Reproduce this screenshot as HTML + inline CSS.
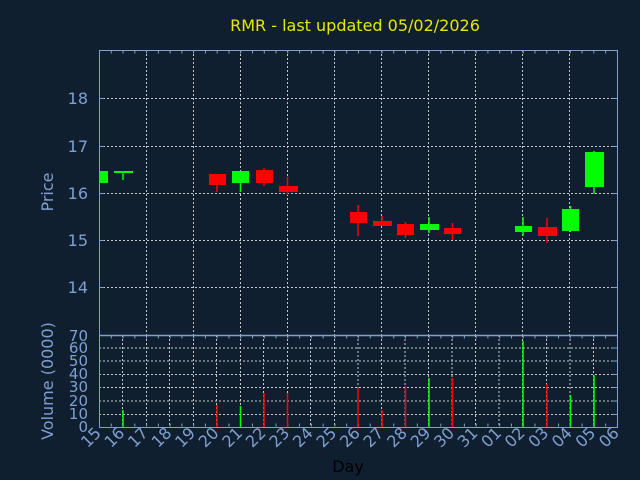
<!DOCTYPE html>
<html><head><meta charset="utf-8"><style>
html,body{margin:0;padding:0;background:#0f1f2f;}
svg{display:block;font-family:"DejaVu Sans","Liberation Sans",sans-serif;}
</style></head><body>
<svg width="640" height="480" viewBox="0 0 640 480" xmlns="http://www.w3.org/2000/svg">
<rect width="640" height="480" fill="#0f1f2f"/>
<text x="355" y="31" fill="#e8e800" font-size="16" text-anchor="middle">RMR - last updated 05/02/2026</text>

<!-- price grid -->
<g stroke="#c8c8c8" stroke-width="1" stroke-dasharray="2 2" fill="none">
<path d="M99 98.5H617M99 146.5H617M99 193.5H617M99 240.5H617M99 287.5H617"/>
<path d="M146.5 50V335M193.5 50V335M240.5 50V335M287.5 50V335M334.5 50V335M381.5 50V335M428.5 50V335M475.5 50V335M522.5 50V335M569.5 50V335"/>
<!-- volume grid -->
<path d="M99 414.5H617M99 401H617M99 387.5H617M99 374.5H617M99 361H617M99 348H617"/>
<path d="M122.5 335V427M146.5 335V427M169.5 335V427M193.5 335V427M216.5 335V427M240.5 335V427M263.5 335V427M287.5 335V427M310.5 335V427M334.5 335V427M358 335V427M381.5 335V427M405 335V427M428.5 335V427M452 335V427M475.5 335V427M499 335V427M522.5 335V427M546.5 335V427M570 335V427M593.5 335V427"/>
</g>

<!-- axes -->
<g stroke="#80a0d0" fill="none">
<path d="M99.5 50.5H617.5V427.5H99.5Z" stroke-width="1"/>
<path d="M99 335.5H617" stroke-width="1.5"/>
<path d="M99 52H618M99 337H618M99 425H618" stroke-width="3" stroke-dasharray="1 10.77"/>
<path d="M612 98.5H617M612 146.5H617M612 193.5H617M612 240.5H617M612 287.5H617M612 414.5H617M612 401H617M612 387.5H617M612 374.5H617M612 361H617M612 348H617"/>
<path d="M99 98.5H104M99 146.5H104M99 193.5H104M99 240.5H104M99 287.5H104"/>
</g>

<!-- y labels -->
<g fill="#80a0d0" font-size="16" text-anchor="end">
<text x="88" y="104">18</text><text x="88" y="152">17</text><text x="88" y="199">16</text><text x="88" y="246">15</text><text x="88" y="293">14</text>
</g>
<g fill="#80a0d0" font-size="15" text-anchor="end">
<text x="88" y="341">70</text><text x="88" y="353">60</text><text x="88" y="366">50</text><text x="88" y="379">40</text><text x="88" y="392">30</text><text x="88" y="406">20</text><text x="88" y="419">10</text><text x="88" y="432">0</text>
</g>
<text transform="translate(53,192) rotate(-90)" fill="#80a0d0" font-size="16" text-anchor="middle">Price</text>
<text transform="translate(53,381) rotate(-90)" fill="#80a0d0" font-size="16" text-anchor="middle">Volume (0000)</text>

<!-- x labels -->
<g fill="#80a0d0" font-size="16" text-anchor="end">
<text transform="translate(102,434) rotate(-45)">15</text>
<text transform="translate(125.5,434) rotate(-45)">16</text>
<text transform="translate(149,434) rotate(-45)">17</text>
<text transform="translate(172.6,434) rotate(-45)">18</text>
<text transform="translate(196.2,434) rotate(-45)">19</text>
<text transform="translate(219.7,434) rotate(-45)">20</text>
<text transform="translate(243.3,434) rotate(-45)">21</text>
<text transform="translate(266.8,434) rotate(-45)">22</text>
<text transform="translate(290.4,434) rotate(-45)">23</text>
<text transform="translate(313.9,434) rotate(-45)">24</text>
<text transform="translate(337.5,434) rotate(-45)">25</text>
<text transform="translate(361,434) rotate(-45)">26</text>
<text transform="translate(384.5,434) rotate(-45)">27</text>
<text transform="translate(408.1,434) rotate(-45)">28</text>
<text transform="translate(431.6,434) rotate(-45)">29</text>
<text transform="translate(455.2,434) rotate(-45)">30</text>
<text transform="translate(478.7,434) rotate(-45)">31</text>
<text transform="translate(502.3,434) rotate(-45)">01</text>
<text transform="translate(525.8,434) rotate(-45)">02</text>
<text transform="translate(549.4,434) rotate(-45)">03</text>
<text transform="translate(572.9,434) rotate(-45)">04</text>
<text transform="translate(596.5,434) rotate(-45)">05</text>
<text transform="translate(620,434) rotate(-45)">06</text>
</g>
<text x="348" y="472" fill="#000" font-size="16" text-anchor="middle">Day</text>

<!-- candles -->
<g stroke-width="1.5">
<rect x="99" y="171" width="9" height="12" fill="#00ff00"/>
<line x1="123" y1="171" x2="123" y2="180" stroke="#00ff00"/><rect x="114" y="171" width="19" height="2" fill="#00ff00"/>
<line x1="217" y1="174" x2="217" y2="192" stroke="#ff0000"/><rect x="209" y="174" width="17" height="11" fill="#ff0000"/>
<line x1="240.5" y1="171" x2="240.5" y2="192" stroke="#00ff00"/><rect x="232" y="171" width="17" height="12" fill="#00ff00"/>
<line x1="264" y1="168" x2="264" y2="186" stroke="#ff0000"/><rect x="256" y="170" width="17" height="13" fill="#ff0000"/>
<line x1="287.5" y1="177" x2="287.5" y2="195" stroke="#ff0000"/><rect x="279" y="186" width="19" height="6" fill="#ff0000"/>
<line x1="358" y1="205" x2="358" y2="236" stroke="#ff0000"/><rect x="350" y="212" width="17" height="11" fill="#ff0000"/>
<line x1="382" y1="216" x2="382" y2="226" stroke="#ff0000"/><rect x="373" y="221" width="19" height="5" fill="#ff0000"/>
<line x1="405.5" y1="222" x2="405.5" y2="238" stroke="#ff0000"/><rect x="397" y="224" width="17" height="11" fill="#ff0000"/>
<line x1="429" y1="217" x2="429" y2="233" stroke="#00ff00"/><rect x="420" y="224" width="19" height="6" fill="#00ff00"/>
<line x1="452.5" y1="223" x2="452.5" y2="240" stroke="#ff0000"/><rect x="444" y="228" width="17" height="6" fill="#ff0000"/>
<line x1="523" y1="217" x2="523" y2="236" stroke="#00ff00"/><rect x="515" y="226" width="17" height="6" fill="#00ff00"/>
<line x1="547" y1="218" x2="547" y2="243" stroke="#ff0000"/><rect x="538" y="227" width="19" height="9" fill="#ff0000"/>
<line x1="570.5" y1="206" x2="570.5" y2="232" stroke="#00ff00"/><rect x="562" y="209" width="17" height="22" fill="#00ff00"/>
<line x1="594" y1="151" x2="594" y2="194" stroke="#00ff00"/><rect x="585" y="152" width="19" height="35" fill="#00ff00"/>
</g>

<!-- volume bars -->
<g stroke-width="1.5">
<line x1="123" y1="410" x2="123" y2="427" stroke="#00ff00"/>
<line x1="217" y1="405" x2="217" y2="427" stroke="#ff0000"/>
<line x1="240.5" y1="406" x2="240.5" y2="427" stroke="#00ff00"/>
<line x1="264" y1="393" x2="264" y2="427" stroke="#ff0000"/>
<line x1="287.5" y1="393" x2="287.5" y2="427" stroke="#ff0000"/>
<line x1="358" y1="388" x2="358" y2="427" stroke="#ff0000"/>
<line x1="382" y1="410" x2="382" y2="427" stroke="#ff0000"/>
<line x1="405.5" y1="386" x2="405.5" y2="427" stroke="#ff0000"/>
<line x1="429" y1="378" x2="429" y2="427" stroke="#00ff00"/>
<line x1="452.5" y1="378" x2="452.5" y2="427" stroke="#ff0000"/>
<line x1="523" y1="341" x2="523" y2="427" stroke="#00ff00"/>
<line x1="547" y1="384" x2="547" y2="427" stroke="#ff0000"/>
<line x1="570.5" y1="395" x2="570.5" y2="427" stroke="#00ff00"/>
<line x1="594" y1="375" x2="594" y2="427" stroke="#00ff00"/>
</g>
</svg>
</body></html>
